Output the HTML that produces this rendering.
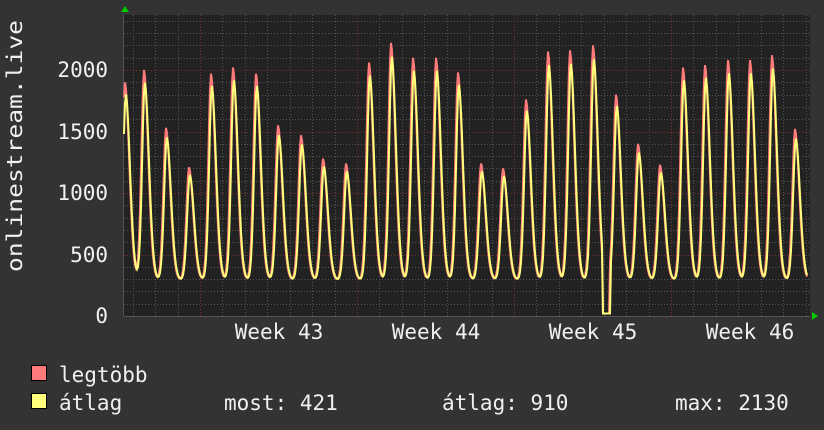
<!DOCTYPE html>
<html><head><style>
html,body{margin:0;padding:0;background:#333;width:824px;height:430px;overflow:hidden}
svg{display:block}
text{font-family:"DejaVu Sans Mono","Liberation Mono",monospace;fill:#f0f0f0;font-size:21px}
</style></head><body>
<svg id="s" width="824" height="430" xmlns="http://www.w3.org/2000/svg">
<rect x="0" y="0" width="824" height="430" fill="#333"/>
<rect x="124" y="15" width="686" height="301" fill="#222"/>
<g id="grid"></g>
<g id="data"></g>
<polygon points="121,12 129,12 125,6" fill="#0c0"/>
<polygon points="812,312 812,320 818,316" fill="#0c0"/>
<g text-anchor="end">
<text x="108" y="323">0</text>
<text x="108" y="262">500</text>
<text x="108" y="200">1000</text>
<text x="108" y="139">1500</text>
<text x="108" y="77">2000</text>
</g>
<text transform="translate(22,272) rotate(-90)" textLength="252" lengthAdjust="spacingAndGlyphs" font-size="22">onlinestream.live</text>
<g text-anchor="middle" font-size="21.5">
<text x="279" y="339">Week 43</text>
<text x="436" y="339">Week 44</text>
<text x="593" y="339">Week 45</text>
<text x="750" y="339">Week 46</text>
</g>
<rect x="31.5" y="365.5" width="15" height="15" fill="#ff7b7b" stroke="#000"/>
<rect x="31.5" y="393.5" width="15" height="15" fill="#ffff7b" stroke="#000"/>
<text x="59" y="382">legtöbb</text>
<text x="59" y="410">átlag</text>
<text x="224" y="410">most: 421</text>
<text x="442" y="410">átlag: 910</text>
<text x="675" y="410">max: 2130</text>
</svg>
<script>
var ns="http://www.w3.org/2000/svg",g=document.getElementById('grid'),d=document.getElementById('data');
function ln(x1,y1,x2,y2,c,da){var l=document.createElementNS(ns,'line');l.setAttribute('x1',x1);l.setAttribute('y1',y1);l.setAttribute('x2',x2);l.setAttribute('y2',y2);l.setAttribute('stroke',c);l.setAttribute('stroke-width',1);if(da)l.setAttribute('stroke-dasharray',da);g.appendChild(l);}
function Y(v){return 316-v*0.123;}
for(var v=100;v<2500;v+=100){var y=Math.round(Y(v))+0.5;ln(124,y,810,y,v%500==0?'#7a3030':'#555','1,2');}
for(var x=200-22.43*3;x<810;x+=22.43){var xx=Math.round(x)+0.5;var maj=Math.abs(((x-200)/157)-Math.round((x-200)/157))<0.01;ln(xx,15,xx,316,maj?'#7a3030':'#555','1,2');}
ln(124,316.5,810,316.5,'#555');ln(123.5,15,123.5,316,'#555');
var P=[[125,1900],[144,2000],[166,1530],[189,1210],[211,1970],[233,2020],[256,1970],[278,1550],[301,1470],[323,1280],[346,1240],[369,2060],[391,2220],[413,2100],[436,2100],[458,1980],[481,1240],[503,1200],[526,1760],[548,2150],[570,2160],[593,2200],[616,1800],[638,1400],[660,1230],[683,2020],[705,2040],[728,2080],[750,2080],[772,2120],[795,1520]];
function val(x,k){var s=0;for(var i=0;i<P.length;i++){var dx=x-P[i][0];var w=dx<0?3.8:6;var e=Math.exp(-Math.pow(Math.abs(dx)/w,1.9));s+=(P[i][1]*k-290)*e;}var v=290+s;if(x>602&&x<610)v=20;return v;}
function poly(k,c,off){var pts=[];for(var x=124;x<=807;x+=1){pts.push(x+','+Y(val(x-off,k)).toFixed(1));}var p=document.createElementNS(ns,'polyline');p.setAttribute('points',pts.join(' '));p.setAttribute('fill','none');p.setAttribute('stroke',c);p.setAttribute('stroke-width',2);d.appendChild(p);}
poly(1,'#ff7b7b',0);poly(0.95,'#ffff7b',0.8);
</script>
</body></html>
